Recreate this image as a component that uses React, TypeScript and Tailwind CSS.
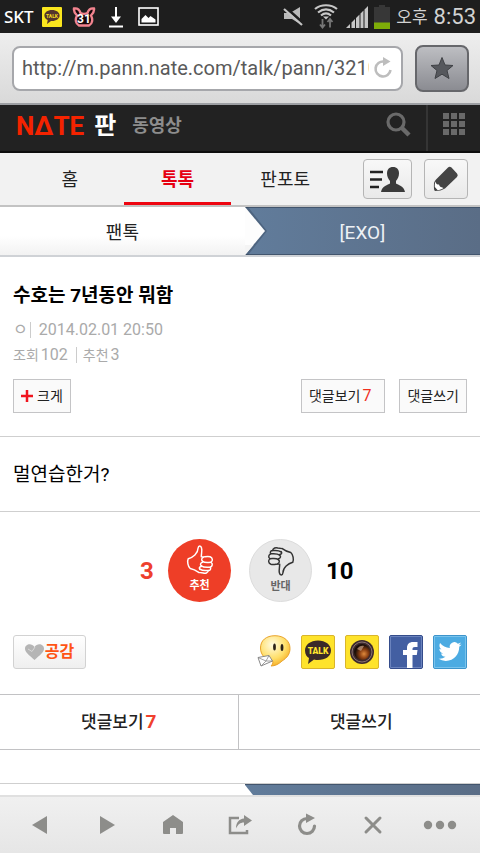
import React from 'react';

const NAV_TABS = [
  { label: '홈', active: false },
  { label: '톡톡', active: true },
  { label: '판포토', active: false },
];

const outlineButton =
  'flex h-[34px] items-center border border-[#c4c4c6] bg-[#fafafa] px-[7px] text-[14px] leading-5 text-[#222]';

function StatusBar() {
  return (
    <div className="flex h-[33px] items-center justify-between bg-[#1e1e1e] pr-1 pl-1 text-white">
      <div className="flex items-center">
        <span className="w-[38px] font-['Noto_Sans'] text-[17px] leading-5 font-medium">SKT</span>
        <svg width="20" height="20" viewBox="0 0 20 20">
          <rect width="20" height="20" rx="1" fill="#fae61e" />
          <path d="M10 3c-4.4 0-7.6 2.4-7.6 5.5 0 2 1.3 3.700 3.300 4.600L5 17l4-3h1c4.400 0 7.600-2.400 7.600-5.500S14.400 3 10 3z" fill="#54352c" />
          <text x="10" y="11" textAnchor="middle" fontSize="5" fontWeight="bold" fontFamily="Roboto, sans-serif" fill="#f6dd1c">
            TALK
          </text>
        </svg>
        <svg className="ml-2.5" width="24" height="20" viewBox="0 0 24 20">
          <path
            d="M2 1.500C5 1 7.500 3 8.500 6c2 1 5 1 7 0C16.500 3 19 1 22 1.500c.5 3-1 5-3 7 2 4 1.500 8-2 10H7C3.500 16.500 3 12.500 5 8.500 3 6.500 1.500 4.500 2 1.500z"
            fill="#16070a"
            stroke="#f2848f"
            strokeWidth="2.400"
          />
          <text x="12" y="16" textAnchor="middle" fontSize="12" fontWeight="bold" fontFamily="Roboto, sans-serif" fill="#fff">
            31
          </text>
        </svg>
        <svg className="ml-3" width="16" height="22" viewBox="0 0 16 22">
          <path d="M8 1v12M1 20.500h14" stroke="#fff" strokeWidth="2" />
          <path d="M3 10.500h10L8 17z" fill="#fff" />
        </svg>
        <svg className="ml-3.5" width="21" height="19" viewBox="0 0 21 19">
          <rect x="1" y="1" width="19" height="17" fill="none" stroke="#fff" strokeWidth="1.600" />
          <path d="M3.500 15.500v-3.500l4-4 3 3 2-2 5 3.500v3z" fill="#fff" />
        </svg>
      </div>
      <div className="flex items-center text-[#d2d2d2]">
        <svg width="21" height="21" viewBox="0 0 21 21">
          <path d="M1 7h6l10-6v17l-8-5H1z" fill="#b9b9b9" />
          <path d="M2 1l18 16" stroke="#1e1e1e" strokeWidth="3" />
          <path d="M1 3l18 16" stroke="#c4c4c4" strokeWidth="2.200" />
        </svg>
        <svg className="ml-2.5" width="24" height="25" viewBox="0 0 24 25">
          <g fill="none" stroke="#c8c8c8" strokeWidth="2.200">
            <path d="M1 5c6-5 16-5 22 0" />
            <path d="M4 8.500c5-4 11-4 16 0" />
            <path d="M7 11.500c3-2.500 7-2.500 10 0" />
          </g>
          <path d="M9 12.500h6l-3 3z" fill="#c8c8c8" />
          <path d="M8.500 15v8M6 20.500l2.500 3 2.500-3M16 23.500v-8M13.500 18l2.500-3 2.500 3" fill="none" stroke="#777" strokeWidth="1.800" />
        </svg>
        <svg className="ml-2" width="22" height="22" viewBox="0 0 22 22">
          <path d="M0 22l4-4v4zM5.500 22v-5.500l3.500-3.500v9zM10 22V12l3.500-3.500V22zM14.500 22V7.500l3-3V22zM18.500 22V3.500l3.500-3.500v22z" fill="#c6c6c6" />
        </svg>
        <svg className="ml-1.5" width="16" height="24" viewBox="0 0 16 24">
          <path d="M5 0h6v2h5v22H0V2h5z" fill="#373737" />
          <rect y="17.500" width="16" height="6.500" fill="#7eac08" />
        </svg>
        <span className="ml-1.5 text-[17px] leading-6">오후</span>
        <span className="ml-1.5 text-[22px] leading-6">8:53</span>
      </div>
    </div>
  );
}

function AddressBar() {
  return (
    <div className="flex h-[72px] items-center gap-3 border-b-2 border-[#9d9fa3] bg-linear-to-b from-[#eeeeee] to-[#d9d9d9] pr-[11px] pl-3">
      <label className="flex h-[45px] min-w-0 grow items-center rounded-lg border-2 border-[#a6a7ab] bg-white px-2">
        <input
          type="text"
          aria-label="주소"
          defaultValue="http://m.pann.nate.com/talk/pann/3210"
          className="min-w-0 grow bg-transparent text-[20px] leading-6 text-[#5a5a5a] outline-none"
        />
        <svg className="ml-1 shrink-0" width="20" height="22" viewBox="0 0 20 22">
          <path d="M11 4.500a7.500 7.500 0 1 0 6.500 8.500" fill="none" stroke="#bdbdbd" strokeWidth="2.600" />
          <path d="M10 0l7.500 4.500L10 9z" fill="#bdbdbd" />
        </svg>
      </label>
      <button
        type="button"
        aria-label="즐겨찾기"
        className="flex h-[47px] w-[54px] shrink-0 items-center justify-center rounded-lg border-2 border-[#66676b] bg-linear-to-b from-[#bdbec2] to-[#8b8c92]"
      >
        <svg width="24" height="24" viewBox="0 0 24 24">
          <path
            d="M12 1.500l3 7.500 8 .500-6 5 2 8-7-4.300-7 4.300 2-8-6-5 8-.500z"
            fill="#56585d"
            stroke="#3f4145"
            strokeWidth="1"
          />
        </svg>
      </button>
    </div>
  );
}

function SiteHeader() {
  return (
    <header className="flex h-12 items-stretch justify-between border-b-2 border-[#0e0e0e] bg-[#222]">
      <div className="flex items-center pb-1 pl-4">
        <a href="#nate" aria-label="NATE" className="text-[26px] leading-8 font-bold text-[#f42300]">
          NΔTE
        </a>
        <a href="#pann" className="ml-2.5 text-[24px] leading-8 font-bold text-white">
          판
        </a>
        <a href="#video" className="ml-4 text-[18px] leading-8 font-bold text-[#8d8d8d]">
          동영상
        </a>
      </div>
      <div className="flex">
        <button type="button" aria-label="검색" className="flex w-10 items-center pb-2">
          <svg width="25" height="25" viewBox="0 0 25 25">
            <circle cx="10" cy="10" r="8" fill="none" stroke="#6a6a6a" strokeWidth="3.200" />
            <path d="M15.500 15.500l7.500 7.500" stroke="#6a6a6a" strokeWidth="4.500" />
          </svg>
        </button>
        <button type="button" aria-label="전체메뉴" className="flex w-[54px] items-center justify-center border-l-2 border-[#353535] pb-2">
          <svg width="22" height="22" viewBox="0 0 22 22" fill="#696969">
            {[0, 8, 16].map((y) => [0, 8, 16].map((x) => <rect key={`${x}-${y}`} x={x} y={y} width="6" height="6" />))}
          </svg>
        </button>
      </div>
    </header>
  );
}

function TabBar() {
  return (
    <div className="flex h-[54px] border-b-2 border-[#c3c3c3] bg-[#f2f2f2] pr-3 pl-4">
      <nav className="flex grow">
        {NAV_TABS.map(({ label, active }) => (
          <a
            key={label}
            href={`#${label}`}
            className={
              active
                ? 'flex flex-1 items-center justify-center border-b-[3px] border-[#ee0611] pt-[5px] text-[18px] leading-6 font-bold text-[#e60012]'
                : 'flex flex-1 items-center justify-center pt-0.5 text-[18px] leading-6 text-[#222]'
            }
          >
            {label}
          </a>
        ))}
      </nav>
      <div className="flex items-center gap-3 pl-6">
        <button
          type="button"
          aria-label="내 소식"
          className="flex h-10 w-[49px] items-center justify-center rounded border border-[#b5b5b5] bg-linear-to-b from-[#f8f8f8] to-[#e9e9e9]"
        >
          <svg width="35" height="25" viewBox="0 0 35 25">
            <path d="M0 5h13M0 12.500h12M0 20h9" stroke="#222" strokeWidth="2.500" />
            <path
              d="M23 0c-4 0-6 2.500-6 6.500 0 3.500 1.500 5.500 3 7.500v2.500c-2 1.500-8 2.500-9 8.500h24c-1-6-7-7-9-8.500V14c1.500-2 3-4 3-7.500C29 2.500 27 0 23 0z"
              fill="#3b3b3b"
            />
          </svg>
        </button>
        <button
          type="button"
          aria-label="글쓰기"
          className="flex h-10 w-11 items-center justify-center rounded border border-[#b5b5b5] bg-linear-to-b from-[#f8f8f8] to-[#e9e9e9]"
        >
          <svg width="26" height="26" viewBox="0 0 26 26">
            <path d="M15 1.500q1.500-1.500 3.500 0l5.500 6q1.500 1.500 0 3.500L12 22.500Q8 25 2 25q-1.500-1-1-8 .5-2 2-3.500z" fill="#444" />
            <path d="M2.500 15.500c.5 2.500 1.500 3 3.500 3 .5 2 1.500 2.500 4.500 3.500-2 1.500-4 2-6 2L1.800 21c0-2 0-4 .7-5.500z" fill="#fff" />
          </svg>
        </button>
      </div>
    </div>
  );
}

function Breadcrumb() {
  return (
    <div className="flex h-[50px] border-b-2 border-[#cfd2d6]">
      <a
        href="#fantalk"
        className="flex w-[51%] items-center justify-center bg-linear-to-b from-white from-60% to-[#f2f2f2] pt-1 text-[18px] leading-6 text-[#222]"
      >
        팬톡
      </a>
      <a
        href="#exo"
        className="relative flex grow items-center justify-center border-y border-[#42556d] bg-linear-to-r from-[#617c9b] to-[#5a6d86] pt-1 text-[19px] leading-6 text-[#eef1f5]"
      >
        <svg className="absolute -top-px left-0 h-12 w-6" viewBox="0 0 24 48">
          <path d="M0 0h3l19 24L3 48H0z" fill="#31435a" opacity=".4" />
          <path d="M0 0l20 24L0 48z" fill="#fdfdfd" />
          <path d="M0 48l8.500-10H0z" fill="#f4f4f4" />
        </svg>
        [EXO]
      </a>
    </div>
  );
}

function ThumbIcon({ className }: { className: string }) {
  return (
    <svg className={className} width="28" height="30" viewBox="-2 -2 84 92" fill="none" stroke="currentColor" strokeWidth="4.500" strokeLinecap="round" strokeLinejoin="round">
      <path d="M36 82C28 76 22 72 10 70 3 64 0 48 4 40 18 36 34 24 34 8c1-9 9-9 11 0 2 8-1 17-1 26 8 2 17-3 27 0 8 3 9 12 3 17 6 4 4 12-2 15 2 6-1 10-6 10-2 8-10 10-16 8l-14-2" />
      <path d="M48 48c8 6 16 3 26 3M44 62c8 6 18 4 28 4M40 72c8 6 16 4 26 4" />
      <path d="M48 48c-5-4-3-10 2-12M44 62c-5-4-2-10 4-11M40 73c-4-4-2-8 4-9" />
    </svg>
  );
}

function VoteArea() {
  return (
    <div className="flex items-center justify-center pl-[26px]">
      <span className="w-7 text-[24px] leading-8 font-bold text-[#ee402d]">3</span>
      <button type="button" className="flex h-[63px] w-[63px] flex-col items-center rounded-full bg-[#ee3e27] pt-1.5 text-white">
        <ThumbIcon className="shrink-0" />
        <span className="pt-px text-[11px] leading-5 font-bold">추천</span>
      </button>
      <button
        type="button"
        className="ml-[18px] flex h-[63px] w-[63px] flex-col items-center rounded-full border border-[#dcdcdc] bg-[#e8e8e8] pt-1.5 text-[#333]"
      >
        <ThumbIcon className="shrink-0 rotate-180" />
        <span className="pt-px text-[11px] leading-5 font-bold text-[#666]">반대</span>
      </button>
      <span className="ml-3.5 w-10 text-[24px] leading-8 font-bold text-black">10</span>
    </div>
  );
}

function ShareLinks() {
  return (
    <div className="flex gap-2.5">
      <a href="#nateon" aria-label="네이트온">
        <svg width="34" height="34" viewBox="0 0 34 34">
          <defs>
            <radialGradient id="face" cx=".4" cy=".3" r=".75">
              <stop offset="0" stopColor="#fffbe0" />
              <stop offset=".6" stopColor="#ffdf6a" />
              <stop offset="1" stopColor="#f5a81c" />
            </radialGradient>
          </defs>
          <path d="M18 .7C9 .7 3.500 5.500 3.500 13S9 25 16 26.500c0 2-1 3.500-2 4.500 4 0 8-2 11-5 5-3 8-7 8-12.500C33 6 27 .7 18 .7z" fill="url(#face)" stroke="#e9a32c" strokeWidth="1" />
          <ellipse cx="17.500" cy="12" rx="1.400" ry="3.500" fill="#2b2118" />
          <ellipse cx="25" cy="12.500" rx="1.400" ry="3.500" fill="#2b2118" />
          <path d="M1 22.500l11-2 3.500 5.500L4 31z" fill="#fff" stroke="#8a8a8a" />
          <path d="M1 22.500l8 3.500 3-5.500M4 31l5-5 6.500 0" fill="none" stroke="#8a8a8a" strokeWidth=".8" />
        </svg>
      </a>
      <a href="#kakaotalk" aria-label="카카오톡">
        <svg width="34" height="34" viewBox="0 0 34 34">
          <rect x=".5" y=".5" width="33" height="33" rx="1.500" fill="#fee32b" stroke="#d9b52c" />
          <path d="M17 5.500C9.500 5.500 4 9.700 4 15.500c0 4 2 6.500 4 7.500l-1 6 6-4.500c1.500.500 2.500.500 4 .500 7.500 0 13-3.700 13-9.500S24.500 5.500 17 5.500z" fill="#3a2929" />
          <text x="17" y="19" textAnchor="middle" fontSize="8.500" fontWeight="900" fontFamily="Roboto, sans-serif" fill="#ffe52d">
            TALK
          </text>
        </svg>
      </a>
      <a href="#kakaostory" aria-label="카카오스토리">
        <svg width="34" height="34" viewBox="0 0 34 34">
          <defs>
            <radialGradient id="lens" cx=".62" cy=".62" r=".55">
              <stop offset="0" stopColor="#e08a3c" />
              <stop offset=".5" stopColor="#8a3f12" />
              <stop offset="1" stopColor="#1b0e08" />
            </radialGradient>
          </defs>
          <rect x=".5" y=".5" width="33" height="33" rx="1.500" fill="#fee32b" stroke="#d9b52c" />
          <circle cx="17" cy="17" r="12" fill="#3d2a2e" />
          <circle cx="17" cy="17" r="10" fill="none" stroke="#8b7470" strokeWidth="1" />
          <circle cx="17" cy="17" r="8" fill="url(#lens)" />
          <path d="M12 14c2-3 5-4 7-3l-3 5z" fill="#c9a184" opacity=".7" />
        </svg>
      </a>
      <a href="#facebook" aria-label="페이스북">
        <svg width="34" height="34" viewBox="0 0 34 34">
          <rect x=".5" y=".5" width="33" height="33" rx="1.500" fill="#435fa2" stroke="#344c8b" />
          <path d="M1.500 1.500h31v31h-31z" fill="none" stroke="#6b83bd" />
          <path d="M18 33V20h-4v-5h4v-2c0-4 2.500-6 6-6h4.500v5H26c-2 0-2.500.700-2.500 2v1h5l-.7 5h-4.300v13z" fill="#fff" />
        </svg>
      </a>
      <a href="#twitter" aria-label="트위터">
        <svg width="34" height="34" viewBox="0 0 34 34">
          <rect x=".5" y=".5" width="33" height="33" rx="1.500" fill="#4cabe2" stroke="#3d94cb" />
          <path d="M1.500 1.500h31v31h-31z" fill="none" stroke="#79c3ec" />
          <g transform="translate(5.500 5) scale(.96)">
            <path
              d="M23.953 4.570a10 10 0 01-2.825.775 4.958 4.958 0 002.163-2.723c-.951.555-2.005.959-3.127 1.184a4.920 4.920 0 00-8.384 4.482C7.690 8.095 4.067 6.130 1.640 3.162a4.822 4.822 0 00-.666 2.475c0 1.710.870 3.213 2.188 4.096a4.904 4.904 0 01-2.228-.616v.060a4.923 4.923 0 003.946 4.827 4.996 4.996 0 01-2.212.085 4.936 4.936 0 004.604 3.417 9.867 9.867 0 01-6.102 2.105c-.390 0-.779-.023-1.170-.067a13.995 13.995 0 007.557 2.209c9.053 0 13.998-7.496 13.998-13.985 0-.210 0-.420-.015-.630A9.935 9.935 0 0024 4.590z"
              fill="#fff"
            />
          </g>
        </svg>
      </a>
    </div>
  );
}

function Article() {
  return (
    <article>
      <div className="flex flex-col border-b border-[#cfcfcf] px-[13px] pt-[25px] pb-[23px]">
        <h1 className="text-[19px] leading-7 font-bold text-black">수호는 7년동안 뭐함</h1>
        <div className="mt-2 flex items-center text-[16px] leading-6 text-[#aaa]">
          <span>ㅇ</span>
          <span className="mr-2 ml-0.5 h-4 w-px bg-[#ccc]" />
          <span>2014.02.01 20:50</span>
        </div>
        <div className="flex items-center pt-px text-[16px] leading-6 text-[#aaa]">
          <span className="text-[14px]">조회</span>
          <span className="ml-0.5">102</span>
          <span className="mr-1.5 ml-2 h-4 w-px bg-[#ccc]" />
          <span className="text-[14px]">추천</span>
          <span className="ml-0.5">3</span>
        </div>
        <div className="mt-3 flex items-center">
          <button type="button" className={outlineButton}>
            <svg className="mr-1" width="12" height="12" viewBox="0 0 12 12">
              <path d="M6 0v12M0 6h12" stroke="#f0141e" strokeWidth="2.500" />
            </svg>
            크게
          </button>
          <a href="#comments" className={`${outlineButton} mr-3.5 ml-auto`}>
            댓글보기
            <span className="mr-1.5 ml-0.5 text-[16px] text-[#f0301e]">7</span>
          </a>
          <a href="#write" className={outlineButton}>
            댓글쓰기
          </a>
        </div>
      </div>
      <p className="border-b border-[#cfcfcf] px-[13px] pt-6 pb-[22px] text-[19px] leading-7 text-black">멀연습한거?</p>
      <div className="pt-[27px]">
        <VoteArea />
      </div>
      <div className="flex items-center justify-between px-[13px] pt-[33px] pb-[25px]">
        <button
          type="button"
          className="flex h-[34px] w-[73px] items-center justify-center rounded-[3px] border border-[#d2d2d2] bg-linear-to-b from-white to-[#efefef] text-[16px] leading-5 font-bold text-[#ff5414]"
        >
          <svg className="mr-px" width="19" height="16" viewBox="0 0 19 16">
            <path d="M9.500 16C4 11 0 8.500 0 4.800 0 0 6.500-1.500 9.500 3 12.500-1.500 19 0 19 4.800 19 8.500 15 11 9.500 16z" fill="#b5b5b5" />
            <path d="M3 5l4 2.500L10 3" fill="none" stroke="#d8d8d8" strokeWidth="1" />
          </svg>
          공감
        </button>
        <ShareLinks />
      </div>
      <div className="flex h-14 border-y border-[#c2c2c4] text-[17px] leading-6 font-medium text-[#222]">
        <a href="#comments" className="flex flex-1 items-center justify-center border-r border-[#c2c2c4]">
          댓글보기
          <span className="ml-0.5 text-[19px] font-bold text-[#f0402d]">7</span>
        </a>
        <a href="#write" className="flex flex-1 items-center justify-center pl-1">
          댓글쓰기
        </a>
      </div>
    </article>
  );
}

const TOOLS = [
  { name: '뒤로', icon: <path d="M19 3v18L4 12z" fill="currentColor" /> },
  { name: '앞으로', icon: <path d="M5 3v18l15-9z" fill="currentColor" /> },
  { name: '홈', icon: <path d="M12 2l10 7v11q0 1-1 1h-6v-6H9v6H3q-1 0-1-1V9z" fill="currentColor" /> },
  {
    name: '공유',
    icon: (
      <>
        <path d="M11 5H2v15h17v-3" fill="none" stroke="currentColor" strokeWidth="2.500" />
        <path d="M16 2l8 5.500-8 5.500v-3.500c-4 0-6 2-8 6 0-6 3-9.500 8-10z" fill="currentColor" />
      </>
    ),
  },
  {
    name: '새로고침',
    icon: (
      <>
        <path d="M12 5.500a7.500 7.500 0 1 0 7.500 7.500" fill="none" stroke="currentColor" strokeWidth="3.200" strokeLinecap="round" />
        <path d="M11 .5L20 5l-9 5z" fill="currentColor" />
      </>
    ),
  },
  { name: '중지', icon: <path d="M5 5l14 14M19 5L5 19" stroke="currentColor" strokeWidth="3" strokeLinecap="round" /> },
];

function BrowserToolbar() {
  return (
    <nav className="flex h-[58px] border-t-2 border-[#e0e0e0] bg-linear-to-b from-[#f0f0f0] to-[#e6e6e6] px-[7px] text-[#8d8d8a]">
      {TOOLS.map(({ name, icon }) => (
        <button key={name} type="button" aria-label={name} className="flex flex-1 items-center justify-center">
          <svg width="24" height="24" viewBox="0 0 24 24">
            {icon}
          </svg>
        </button>
      ))}
      <button type="button" aria-label="더보기" className="flex flex-1 items-center justify-center">
        <svg width="34" height="24" viewBox="0 0 34 24" fill="currentColor">
          <circle cx="5" cy="12" r="4.200" />
          <circle cx="17" cy="12" r="4.200" />
          <circle cx="29" cy="12" r="4.200" />
        </svg>
      </button>
    </nav>
  );
}

export default function App() {
  return (
    <div className="flex min-h-screen flex-col bg-white font-[Roboto,'Noto_Sans_CJK_KR',sans-serif]">
      <StatusBar />
      <AddressBar />
      <SiteHeader />
      <TabBar />
      <main className="grow">
        <Breadcrumb />
        <Article />
        <div className="mt-[33px] flex h-3 border-t border-[#cfcfcf]">
          <div className="w-[51%]" />
          <div className="relative grow border-t border-[#42556d] bg-linear-to-r from-[#617c9b] to-[#5a6d86]">
            <svg className="absolute top-0 left-0" width="10" height="10" viewBox="0 0 10 10">
              <path d="M0 0l8 10H0z" fill="#fff" />
            </svg>
          </div>
        </div>
      </main>
      <BrowserToolbar />
    </div>
  );
}
